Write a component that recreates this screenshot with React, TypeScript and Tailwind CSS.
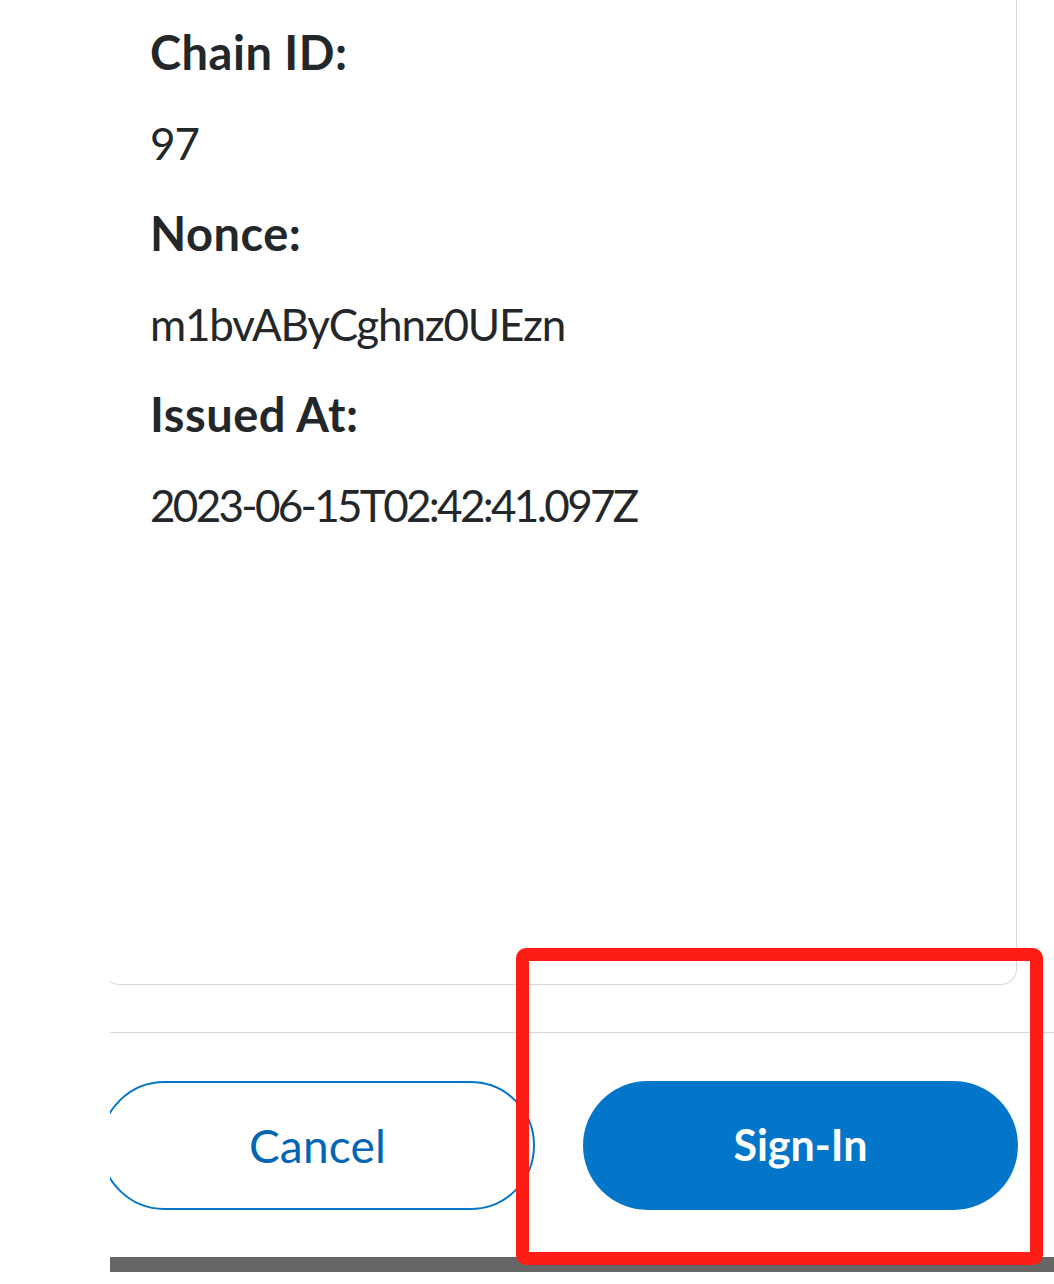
const fields = [
  { label: 'Chain ID:', value: '97', track: 'tracking-[-1px]' },
  { label: 'Nonce:', value: 'm1bvAByCghnz0UEzn', track: 'tracking-[-1.2px]' },
  { label: 'Issued At:', value: '2023-06-15T02:42:41.097Z', track: 'tracking-[-2.7px]' },
];

export default function App() {
  return (
    <div className="relative w-[1054px] h-[1284px] bg-white font-['Lato',sans-serif] text-[#24272a]">
      <div className="ml-[110px] w-[944px] h-[1272px] overflow-hidden flex flex-col">
        {/* message card, top edge is scrolled out of view */}
        <div className="-ml-[7px] w-[914px] h-[985px] shrink-0 border border-t-0 border-[#d6d9dc] rounded-b-2xl pl-[46px] pt-[3px]">
          {fields.map((f) => (
            <div key={f.label}>
              <div className="text-[47px] leading-[99px] font-bold tracking-[0.5px]">{f.label}</div>
              <div className={`text-[44px] leading-[82px] ${f.track}`}>{f.value}</div>
            </div>
          ))}
        </div>

        <div className="mt-[47px] h-px bg-[#d6d9dc] shrink-0" />

        <div className="mt-[48px] -ml-[10px] flex gap-[48px] shrink-0">
          <button className="w-[435px] h-[129px] rounded-full border-2 border-[#0376c9] text-[#0366b5] text-[46px] tracking-[0.2px]">
            Cancel
          </button>
          <button className="w-[435px] h-[129px] rounded-full bg-[#0376c9] text-white text-[43px] font-bold">
            Sign-In
          </button>
        </div>

        <div className="mt-auto h-[15px] bg-[#666666] shrink-0" />
      </div>

      {/* annotation */}
      <div className="absolute left-[516px] top-[948px] w-[527px] h-[317px] border-[13px] border-[#fe1d14] rounded-[10px]" />
    </div>
  );
}
